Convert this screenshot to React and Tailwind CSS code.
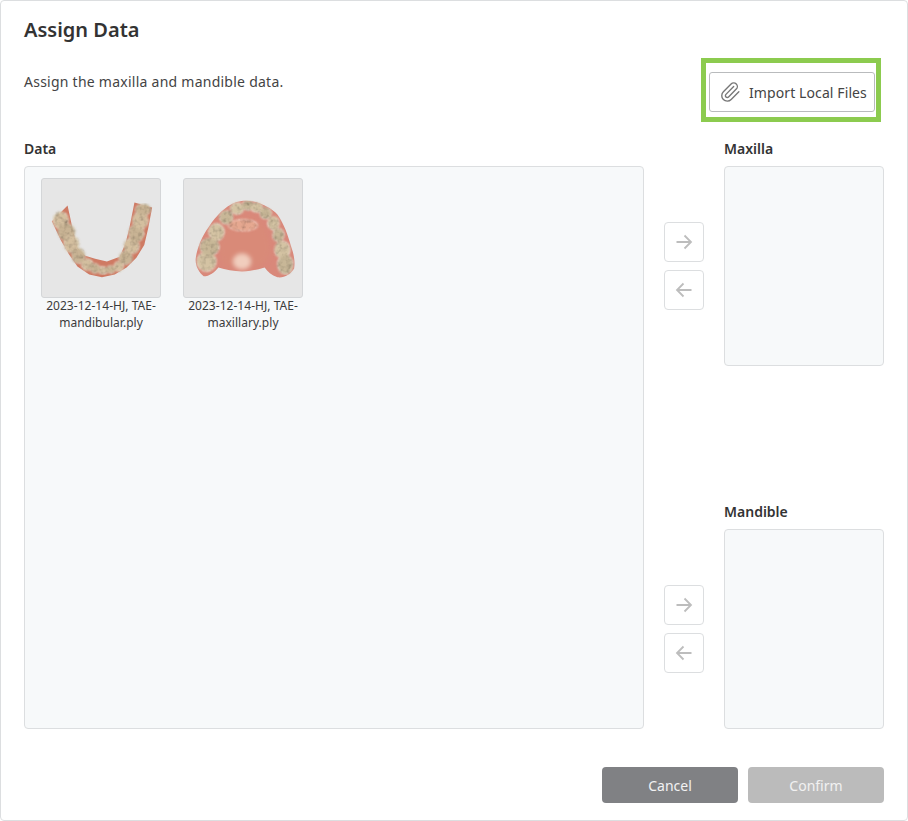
import React from "react";
import { Paperclip } from "lucide-react";

const lowerTeeth = [
  [19,42,8,9],[25,54,9,9],[30,66,8,9],[37,78,7,8],[46,87,6,6],[54,91,5,5],[62,93,5,4],[70,92,5,4],[78,89,5,5],[85,80,7,7],[91,68,8,8],[96,55,8,9],[100,42,8,9],[103,31,8,6]
];
const upperTeeth = [
  [23,84,10,10],[26,69,10,9],[33,54,8,9],[43,39,7,7],[54,30,7,6],[65,27,6,5],[74,29,6,5],[83,35,6,6],[91,45,6,7],[96,57,6,7],[100,72,8,9],[103,87,8,10]
];
const mottle = (id) => (
  <filter id={id} x="0" y="0" width="100%" height="100%">
    <feTurbulence type="fractalNoise" baseFrequency="0.22" numOctaves="2" seed="4" result="n" />
    <feColorMatrix in="n" type="matrix" values="1.7 0 0 0 0  1.7 0 0 0 0  1.7 0 0 0 0  0 0 0 1 0" result="g" />
    <feComposite in="g" in2="SourceGraphic" operator="in" result="m" />
    <feBlend in="SourceGraphic" in2="m" mode="multiply" />
  </filter>
);

function Lower() {
  return (
    <svg viewBox="0 0 120 120" className="w-full h-full block">
      <defs>
        {mottle("mottleA")}
        <filter id="softA"><feGaussianBlur stdDeviation="0.5" /></filter>
        <filter id="softF"><feGaussianBlur stdDeviation="1" /></filter>
      </defs>
      <g filter="url(#softA)">
        <path d="M10 43L26 27L31 50L36 70L44 78L54 81L66 84L79 79L85 65L89 49L94 24L112 29L108 50L104 67L96 80L86 90L74 97L61 100L48 97L36 89L27 76L19 62Z" fill="#cf7a64" />
      </g>
      <g filter="url(#mottleA)" opacity="0.95">
        <g filter="url(#softF)">
          {lowerTeeth.map(([x, y, rx, ry], i) => (
            <ellipse key={i} cx={x} cy={y} rx={rx} ry={ry} fill={i % 2 ? "#c8b797" : "#d4c3a3"} />
          ))}
        </g>
      </g>
    </svg>
  );
}

function Upper() {
  return (
    <svg viewBox="0 0 120 120" className="w-full h-full block">
      <defs>
        {mottle("mottleB")}
        <filter id="softC"><feGaussianBlur stdDeviation="0.5" /></filter>
        <filter id="softG"><feGaussianBlur stdDeviation="1" /></filter>
        <filter id="softE"><feGaussianBlur stdDeviation="2" /></filter>
      </defs>
      <g filter="url(#softC)">
        <path d="M12 80C14 68 19 57 25 49C33 37 42 28 52 24C60 21 68 22 75 24C85 28 90 31 95 36C102 46 106 58 109 69C112 77 113 84 112 91C108 97 102 101 95 100C89 98 85 94 82 90C75 92 67 94 59 94C51 94 42 92 35 90C31 95 26 99 20 99C15 95 11 88 12 80Z" fill="#d9887a" />
      </g>
      <g filter="url(#softE)">
        <path d="M38 56C45 44 55 38 65 38C75 40 84 50 86 60C89 72 87 82 80 87C70 91 50 91 40 86C35 78 35 66 38 56Z" fill="#d98a78" />
        <ellipse cx="59" cy="84" rx="9" ry="8" fill="#f1cdbd" />
      </g>
      <g filter="url(#mottleB)">
        <g filter="url(#softG)">
          {upperTeeth.map(([x, y, rx, ry], i) => (
            <ellipse key={i} cx={x} cy={y} rx={rx} ry={ry} fill={i % 2 ? "#c8b797" : "#d4c3a3"} />
          ))}
          <ellipse cx="60" cy="47" rx="15" ry="6" fill="#e6a890" />
        </g>
      </g>
    </svg>
  );
}

function Thumb({ line1, line2, children }) {
  return (
    <div className="w-[120px] flex flex-col">
      <div className="w-[120px] h-[120px] bg-[#e6e6e6] border border-[#d4d6d8] rounded-[3px] overflow-hidden">{children}</div>
      <div className="mt-[-1px] text-[12px] leading-[17px] tracking-[0.03px] text-[#3c3c3c] text-center whitespace-nowrap">
        <div>{line1}</div>
        <div>{line2}</div>
      </div>
    </div>
  );
}

function ArrowBtn({ dir }) {
  return (
    <div className="w-[40px] h-[40px] border border-[#dcdee0] rounded-[4px] bg-white flex items-center justify-center">
      <svg width="18" height="18" viewBox="0 0 18 18" fill="none" stroke="#bdbdbd" strokeWidth="1.8">
        {dir === "right" ? <path d="M1.5 9H16M9.5 2.5L16 9L9.5 15.5" /> : <path d="M16.5 9H2M8.5 2.5L2 9L8.5 15.5" />}
      </svg>
    </div>
  );
}

function ArrowPair() {
  return (
    <div className="flex flex-col gap-2">
      <ArrowBtn dir="right" />
      <ArrowBtn dir="left" />
    </div>
  );
}

function Label({ children }) {
  return <div className="h-[18px] text-[14px] leading-[18px] font-semibold text-[#333333] mb-[8px]">{children}</div>;
}

function Box() {
  return <div className="w-[160px] h-[200px] bg-[#f7f9fa] border border-[#dcdee0] rounded-[4px]" />;
}

export default function App() {
  return (
    <div className="relative w-[908px] h-[821px] bg-white border border-[#dcdee0] rounded-[4px] px-[23px] flex flex-col text-[#333333]" style={{ fontFamily: '"Noto Sans", sans-serif' }}>
      <h1 className="mt-[16px] h-[26px] text-[20px] leading-[26px] font-semibold text-[#333333] whitespace-nowrap">Assign Data</h1>
      <div className="mt-[29px] flex justify-between h-[40px] pr-[9px]">
        <p className="mt-[-1px] text-[14px] leading-[22px] tracking-[0.25px] text-[#444444]">Assign the maxilla and mandible data.</p>
        <button className="w-[166px] h-[40px] border border-[#b9bbbd] rounded-[3px] flex items-center pl-[9px] bg-white">
          <Paperclip size={22} strokeWidth={1.5} color="#777777" />
          <span className="ml-[8px] pt-[2px] text-[14px] leading-[20px] tracking-[0.1px] text-[#444444] whitespace-nowrap">Import Local Files</span>
        </button>
      </div>
      <div className="mt-[28px] flex">
        <div className="w-[620px]">
          <Label>Data</Label>
          <div className="w-[620px] h-[563px] bg-[#f7f9fa] border border-[#dcdee0] rounded-[4px] pl-[16px] pt-[11px] flex items-start gap-[22px]">
            <Thumb line1="2023-12-14-HJ, TAE-" line2="mandibular.ply"><Lower /></Thumb>
            <Thumb line1="2023-12-14-HJ, TAE-" line2="maxillary.ply"><Upper /></Thumb>
          </div>
        </div>
        <div className="w-[40px] mx-[20px] pt-[82px] flex flex-col gap-[275px]">
          <ArrowPair />
          <ArrowPair />
        </div>
        <div className="w-[160px] flex flex-col gap-[137px]">
          <div>
            <Label>Maxilla</Label>
            <Box />
          </div>
          <div>
            <Label>Mandible</Label>
            <Box />
          </div>
        </div>
      </div>
      <div className="mt-[38px] flex justify-end gap-[10px]">
        <button className="w-[136px] h-[36px] rounded-[4px] bg-[#808184] text-white/90 text-[14px]">Cancel</button>
        <button className="w-[136px] h-[36px] rounded-[4px] bg-[#bbbbbb] text-white/80 text-[14px]">Confirm</button>
      </div>
      <div className="absolute left-[700px] top-[57px] w-[180px] h-[64px] border-[5px] border-[#8ccb4f] pointer-events-none" />
    </div>
  );
}
